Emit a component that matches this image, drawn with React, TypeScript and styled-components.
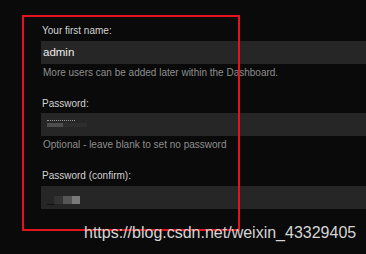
import React from 'react'
import styled, { createGlobalStyle } from 'styled-components'

const GlobalStyle = createGlobalStyle`
  html, body {
    margin: 0;
    padding: 0;
    background: #0a0a0a;
  }
  body {
    font-family: "Liberation Sans", Arial, sans-serif;
    width: 366px;
    height: 254px;
    overflow: hidden;
  }
`

const Page = styled.div`
  position: relative;
  width: 366px;
  height: 254px;
  background: #0a0a0a;
  overflow: hidden;
`

const Form = styled.div`
  display: flex;
  flex-direction: column;
  padding: 25px 0 0 41px;
`

const Field = styled.div`
  display: flex;
  flex-direction: column;
  margin-bottom: 19px;
`

const Label = styled.div`
  font-size: 10px;
  line-height: 12px;
  color: #d2d2d2;
  padding-left: 1px;
  margin-bottom: 3.5px;
`

const Input = styled.div`
  display: flex;
  align-items: center;
  height: 23px;
  background: #262626;
  padding-left: 2px;
  font-size: 11.5px;
  color: #ececec;
  position: relative;
`

const Help = styled.div`
  font-size: 10px;
  line-height: 12px;
  color: #8e8e8e;
  padding-left: 2px;
  margin-top: 3px;
`

const Dots = styled.span`
  position: absolute;
  left: 6px;
  top: 7px;
  width: 28px;
  border-top: 1px dotted #9a9a9a;
`

const Smudge = styled.span<{ $left: number; $top: number; $w: number; $h: number; $c: string }>`
  position: absolute;
  left: ${(p) => p.$left}px;
  top: ${(p) => p.$top}px;
  width: ${(p) => p.$w}px;
  height: ${(p) => p.$h}px;
  background: ${(p) => p.$c};
`

const Annotation = styled.div`
  position: absolute;
  left: 22px;
  top: 15px;
  width: 214px;
  height: 212px;
  border: 2px solid #e3141c;
  pointer-events: none;
`

const Watermark = styled.div`
  position: absolute;
  left: 84px;
  top: 224px;
  font-size: 16px;
  line-height: 18px;
  color: #d4d4d4;
  white-space: nowrap;
`

export default function App() {
  return (
    <Page>
      <GlobalStyle />
      <Form>
        <Field>
          <Label>Your first name:</Label>
          <Input>admin</Input>
          <Help>More users can be added later within the Dashboard.</Help>
        </Field>
        <Field>
          <Label>Password:</Label>
          <Input>
            <Dots />
            <Smudge $left={6} $top={10} $w={16} $h={4} $c="#4e4e4e" />
            <Smudge $left={22} $top={10} $w={24} $h={4} $c="#2e2e2e" />
          </Input>
          <Help>Optional - leave blank to set no password</Help>
        </Field>
        <Field>
          <Label>Password (confirm):</Label>
          <Input>
            <Smudge $left={6} $top={18} $w={8} $h={1} $c="#111" />
            <Smudge $left={13} $top={10} $w={9} $h={8} $c="#333" />
            <Smudge $left={22} $top={10} $w={9} $h={8} $c="#555" />
            <Smudge $left={31} $top={10} $w={8} $h={8} $c="#7a7a7a" />
          </Input>
        </Field>
      </Form>
      <Annotation />
      <Watermark>https://blog.csdn.net/weixin_43329405</Watermark>
    </Page>
  )
}
